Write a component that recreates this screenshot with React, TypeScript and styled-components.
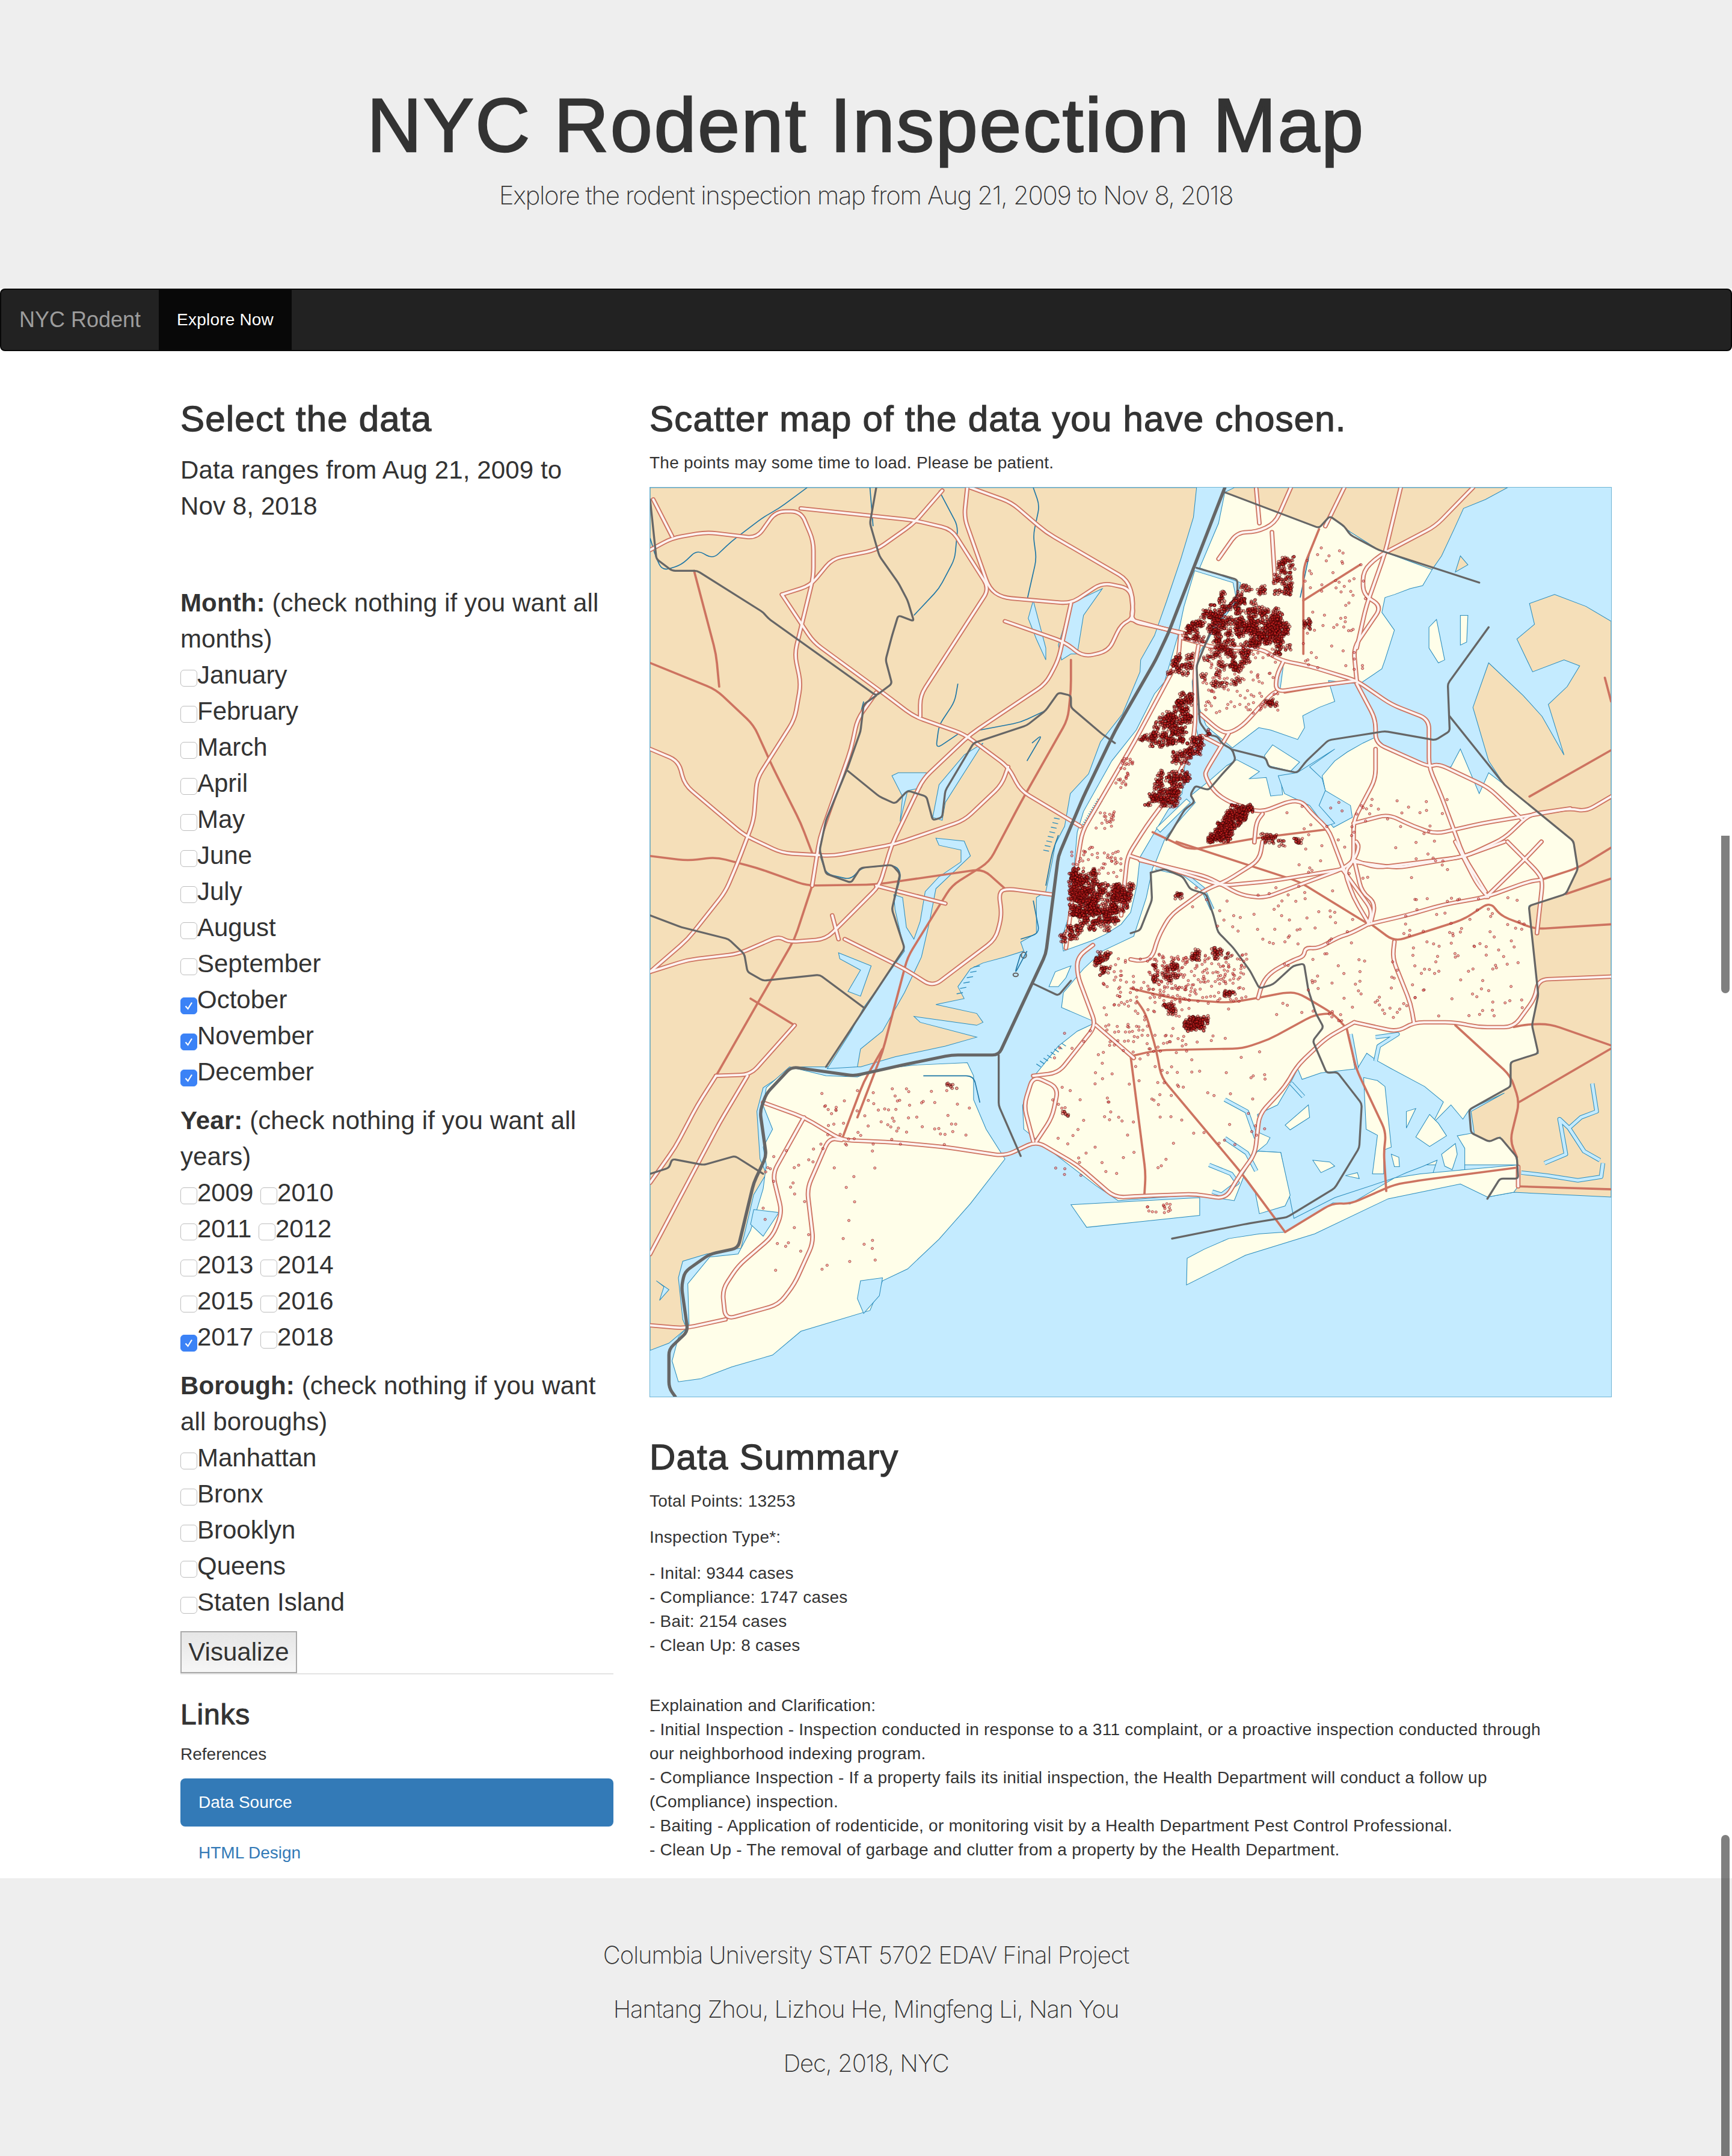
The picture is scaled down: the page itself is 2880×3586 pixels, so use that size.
import { useMemo } from "react";
import styled, { createGlobalStyle } from "styled-components";

const GlobalStyle = createGlobalStyle`
  html, body { margin: 0; padding: 0; background: #fff; }
  * { box-sizing: border-box; }
`;

const Page = styled.div`
  position: relative;
  width: 2880px;
  height: 3586px;
  overflow: hidden;
  font-family: "Liberation Sans", Arial, sans-serif;
  font-size: 28px;
  line-height: 40px;
  color: #333;
`;

const Jumbotron = styled.header`
  height: 480px;
  background: #eee;
  padding-top: 140px;
  text-align: center;
`;

const Title = styled.h1`
  margin: 0;
  font-size: 126px;
  line-height: 138px;
  font-weight: 400;
  letter-spacing: 2.5px;
  -webkit-text-stroke: 2.4px #333;
`;

const Lead = styled.p`
  margin: 17px 0 0;
  font-family: Inter, "Liberation Sans", sans-serif;
  font-size: 42px;
  line-height: 60px;
  font-weight: 200;
  letter-spacing: -1.4px;
`;

const Navbar = styled.nav`
  display: flex;
  height: 104px;
  background: #222;
  border: 2px solid #080808;
  border-radius: 8px;
`;

const Brand = styled.div`
  padding: 30px;
  font-size: 36px;
  line-height: 40px;
  color: #9d9d9d;
`;

const NavLink = styled.div`
  padding: 30px;
  background: #080808;
  color: #fff;
  letter-spacing: 0.2px;
`;

const Columns = styled.div`
  display: flex;
  height: 2540px;
  padding: 80px 0 0 270px;
`;

const Sidebar = styled.aside`
  width: 780px;
  padding: 0 30px;
`;

const Main = styled.main`
  width: 1660px;
  padding: 0 30px;
  letter-spacing: 0.24px;
`;

const Heading = styled.h2`
  margin: 0 0 20px;
  font-size: 60px;
  line-height: 66px;
  font-weight: 400;
  letter-spacing: 1.2px;
  -webkit-text-stroke: 1.3px #333;
`;

const BigText = styled.p`
  margin: 0 0 101px;
  padding-top: 2px;
  font-size: 42px;
  line-height: 60px;
  letter-spacing: 0.12px;
`;

const GroupLabel = styled.div`
  margin-top: 21px;
  font-size: 42px;
  line-height: 60px;
  letter-spacing: 0.12px;
  b { font-weight: 700; }
`;

const CheckRow = styled.div`
  font-size: 42px;
  line-height: 60px;
  white-space: nowrap;
`;

const Box = styled.span<{ $on?: boolean }>`
  display: inline-flex;
  align-items: center;
  justify-content: center;
  width: 28px;
  height: 28px;
  vertical-align: -5px;
  border-radius: 6px;
  background: ${(p) => (p.$on ? "#3b82f6" : "#fff")};
  border: 1px solid ${(p) => (p.$on ? "#3b82f6" : "#bdbdbd")};
`;

const Rule = styled.div`
  border-bottom: 2px solid #e3e3e3;
`;

const VisualizeButton = styled.button`
  display: block;
  width: 194px;
  height: 70px;
  margin: 18px 0 0;
  padding: 0;
  border: 2px solid #aaa;
  background: linear-gradient(#e6e6e6, #f6f6f6);
  font-family: inherit;
  font-size: 42px;
  color: #333;
`;

const LinksTitle = styled.h3`
  margin: 40px 0 20px;
  font-size: 48px;
  line-height: 53px;
  font-weight: 400;
  letter-spacing: 0.8px;
  -webkit-text-stroke: 1px #333;
`;

const Small = styled.p`
  margin: 0 0 20px;
`;

const Pill = styled.div<{ $active?: boolean }>`
  height: 80px;
  margin-bottom: 4px;
  padding: 20px 30px;
  border-radius: 8px;
  color: ${(p) => (p.$active ? "#fff" : "#337ab7")};
  background: ${(p) => (p.$active ? "#337ab7" : "transparent")};
`;

const MapFrame = styled.div`
  width: 1600px;
  height: 1514px;
  margin-bottom: 67px;
  border: 1px solid #6fb4d4;
  svg { display: block; width: 100%; height: 100%; }
`;

const Footer = styled.footer`
  height: 462px;
  padding-top: 98px;
  background: #eee;
  text-align: center;
  font-family: Inter, "Liberation Sans", sans-serif;
  font-size: 40px;
  line-height: 60px;
  font-weight: 200;
  letter-spacing: -1.05px;
  p { margin: 0 0 30px; }
`;

const ScrollThumb = styled.div<{ $top: number; $height: number }>`
  position: absolute;
  right: 4px;
  top: ${(p) => p.$top}px;
  width: 14px;
  height: ${(p) => p.$height}px;
  border-radius: 0 0 7px 7px;
  background: rgba(0, 0, 0, 0.5);
`;

const ScrollThumbLow = styled(ScrollThumb)`
  border-radius: 7px 7px 0 0;
`;

const WATER = "#c4ebff";
const TAN = "#f5dfb9";
const CREAM = "#fffee9";
const COAST = "#2a8cbc";
const ROAD = "#cd7360";
const ROAD_IN = "#fdf3f1";
const BORDER = "#666";

const tanLand = [
  "10,10 880,10 875,60 855,130 832,202 813,259 791,300 790,320 762,391 727,438 708,492 679,525 670,580 655,610 650,640 640,690 625,700 625,760 600,775 605,790 575,800 540,810 520,820 500,850 510,870 465,880 530,895 540,910 530,915 430,900 440,910 530,935 480,950 400,968 345,985 295,985 240,985 190,1020 180,1060 185,1140 195,1165 175,1200 155,1290 100,1300 62,1312 55,1340 62,1410 68,1425 40,1450 10,1462",
  "925,18 940,10 1375,10 1340,30 1305,45 1290,80 1270,125 1255,148 1170,115 1125,85 1092,58 1075,78",
  "1300,125 1312,140 1292,152",
  "1540,235 1500,210 1450,190 1410,205 1418,240 1390,265 1415,320 1465,300 1490,310 1470,345 1440,375 1465,460 1430,395 1400,360 1345,305 1320,380 1345,470 1370,510 1480,605 1487,652 1468,694 1409,714 1424,864 1414,915 1424,962 1380,977 1380,1018 1314,1057 1317,1096 1346,1111 1363,1103 1390,1137 1392,1165 1392,1186 1540,1191 1540,235",
  "1392,1186 1540,1191 1540,1204 1385,1196 1343,1204 1363,1173 1392,1173",
];

const waterOnTan = [
  "292,988 330,925 350,885 415,790 400,720 398,695 412,700 418,750 430,770 440,740 448,690 470,665 505,640 505,620 470,612 465,600 510,605 520,630 490,660 465,685 455,740 442,800 415,860 380,925 345,955 340,985",
  "310,793 362,815 345,866 325,858 345,822 312,803",
  "405,490 450,490 442,515 420,520 408,572 412,530 395,495",
  "510,460 470,510 460,565 475,570 480,540 510,490 540,440",
  "680,290 665,300 660,275 680,205 700,195 730,180 700,225 690,290",
  "620,200 640,280 640,300 625,265 612,230",
  "20,1345 40,1360 25,1378 32,1355",
];

const creamLand = [
  "232,985 290,1000 340,1002 370,990 430,982 515,978 525,1000 525,1040 545,1090 575,1140 520,1215 470,1275 420,1325 380,1345 360,1395 250,1430 205,1470 140,1490 90,1510 55,1515 45,1480 55,1440 72,1420 70,1350 105,1305 150,1300 170,1260 190,1190 195,1150 190,1120 205,1090 190,1050 195,1020",
  "925,18 1075,78 1092,58 1125,85 1170,115 1255,148 1240,175 1220,180 1195,190 1180,195 1175,220 1195,250 1180,300 1175,315 1140,340 1090,335 1100,370 1075,380 1049,394 1052,414 1041,434 998,418 979,414 937,448 905,420 895,410 880,370 877,310 883,300 902,259 943,202 950,170 885,145 915,70",
  "877,150 938,170 943,195 902,255 880,297 873,337 876,400 885,440 862,470 857,525 835,552 810,596 790,632 785,680 775,725 760,745 735,762 715,772 668,790 665,770 680,720 685,650 690,590 700,555 745,470 784,418 813,357 829,337 850,260 860,210",
  "944,468 980,488 964,500 991,498 998,529 1017,527 1014,498 1050,510 1070,545 1098,582 1128,565 1125,545 1085,520 1080,495 1100,470 1120,455 1145,440 1165,430 1190,455 1250,480 1285,480 1300,450 1330,525 1345,490 1370,510 1480,605 1487,652 1468,694 1409,714 1424,864 1414,915 1424,962 1380,977 1380,1018 1314,1057 1317,1096 1346,1111 1363,1103 1390,1137 1392,1155 1390,1150 1100,1150 985,1130 955,1170 940,1210 880,1200 755,1210 720,1185 640,1120 605,1090 603,1050 618,1005 660,950 690,925 720,910 665,885 668,860 700,820 730,790 780,765 800,700 810,650 815,640 830,600 857,565 878,540 870,529 902,502 928,478",
  "988,461 1001,443 1044,472 1030,487 994,478",
  "1250,245 1262,232 1275,300 1265,305 1250,280",
  "1300,225 1312,225 1310,270 1300,275",
  "645,850 655,825 680,815 672,835 660,850",
  "864,534 870,540 822,590 816,583",
];

const bayWater =
  "977,1065 980,1096 997,1104 992,1114 977,1127 1014,1129 1035,1240 1100,1205 1195,1172 1214,1163 1239,1153 1263,1142 1256,1165 1307,1158 1307,1122 1295,1101 1322,1096 1317,1060 1370,1029 1314,1057 1304,1073 1285,1049 1256,1080 1273,1044 1243,1018 1190,988 1168,975 1151,962 1136,988 1078,995 1048,1006 1041,988 1029,1013 1009,1049";

const creamOnBay = [
  "1021,1083 1058,1049 1060,1070 1029,1091",
  "1065,1142 1092,1145 1100,1152 1078,1163",
  "1117,1168 1136,1163 1139,1173",
  "1146,1003 1168,1008 1180,1018 1190,1120 1178,1125 1178,1165 1160,1165 1168,1100 1150,1090",
  "1214,1060 1229,1055 1214,1088",
  "1229,1103 1251,1065 1265,1080 1278,1101 1251,1119",
  "1270,1132 1292,1114 1295,1132 1287,1158 1275,1152",
  "1190,1132 1202,1137 1203,1153 1195,1153",
  "973,1194 953,1168 977,1127 1014,1129 1029,1201 1021,1219 980,1232",
  "680,1217 885,1205 885,1235 705,1255",
  "864,1352 865,1307 892,1292 931,1274 980,1266 1021,1263 1097,1214 1124,1216 1195,1172 1236,1165 1307,1158 1392,1150 1392,1186 1385,1196 1343,1204 1300,1182 1185,1207 1068,1266 958,1302",
];

const waterInLand = [
  "345,1345 380,1340 375,1370 350,1400 340,1375",
  "175,1225 215,1230 190,1270 170,1250",
  "1010,495 1040,490 1070,470 1100,450 1060,480 1080,500 1085,520 1075,545 1100,575 1085,580 1060,545 1020,525",
];

const creeks = [
  "815,650 860,660 890,685 905,720",
  "925,1040 960,1060 975,1105",
  "900,1150 935,1165 945,1180 920,1200 905,1195",
  "925,1105 960,1130 975,1160",
  "1030,1012 1050,1035",
  "1397,1163 1439,1168 1487,1176 1524,1170 1527,1147",
  "1434,1147 1468,1132 1458,1073 1473,1088 1492,1070 1517,1060 1510,1013",
  "1522,1142 1497,1127 1473,1088",
  "1125,930 1135,988",
  "1165,935 1200,930 1170,950 1165,975",
  "1015,310 1010,350",
];

const streams = [
  "10,95 20,130 30,150 60,140 85,115 110,130 140,100 190,60 215,45 260,10",
  "470,15 500,75 495,130 470,180 430,225",
  "360,10 365,75",
  "620,10 630,40 620,90 625,130 610,200",
  "350,370 330,450 300,540 278,620 290,660 330,670 345,650 400,645 410,660 395,720",
  "500,340 495,370 470,410 465,450 500,425",
  "525,420 600,405 640,385",
  "610,470 635,425 618,440",
  "1060,120 1045,195",
  "660,595 650,625 640,680",
  "620,705 630,760 600,770",
  "610,790 590,830 600,795",
  "445,1000 525,1000 535,1045",
];

// piers along the shore, start point, end point, count, tick vector
const piers: [number, number, number, number, number, number, number][] = [
  [698, 576, 722, 534, 13, 8, 5],
  [645, 622, 662, 568, 8, -9, -2],
  [632, 985, 672, 950, 8, -7, -5],
  [508, 860, 535, 815, 6, -10, 2],
];

const doubleRoads = [
  "10,115 45,95 100,85 180,95 210,50 250,50 270,100 270,160 240,290 250,340 240,400 180,500 175,570 150,640 130,690 70,770 10,825",
  "15,30 45,92",
  "220,190 265,175 300,130 370,115 430,70 475,15",
  "250,45 430,65 490,80 550,180 440,360 440,395",
  "515,10 510,60 550,180 570,195 680,205 730,170 775,180 780,230 760,240 740,285 700,295 670,270 575,235",
  "520,10 585,35 640,85 770,165 780,200 775,235 860,255",
  "220,190 270,270 380,355 430,395 510,425 580,480 600,520 695,580",
  "10,450 55,470 65,510 160,595 220,625 300,630 400,610 510,570 570,510 580,480",
  "370,355 340,400 330,450 280,600 268,680",
  "10,825 70,805 150,795 215,765 230,775 290,770 375,680 395,610 445,500 520,425 640,340 660,300 680,205",
  "370,680 480,710",
  "320,770 415,820 460,850 560,770 570,730 565,690 580,685 650,695",
  "300,730 310,770",
  "115,1000 85,1050 50,1120 10,1180",
  "165,1000 120,1080 60,1200 10,1300",
  "115,1000 170,998 240,915",
  "775,232 854,255",
  "854,259 851,300 781,438 698,589 690,640 672,785",
  "883,276 877,313 878,404 874,440 835,530 800,580 770,630 760,730",
  "856,263 889,273 902,278 982,281 1014,301 1058,310 1135,335 1190,375 1250,400 1250,480 1270,530 1305,630 1340,690",
  "1018,303 1007,327 1006,354 1061,345 1135,335",
  "886,391 915,418 931,424 953,411 998,359 1006,354",
  "931,424 896,485 893,495 908,522 931,539 982,557 1030,537 1049,539 1061,556 1090,585 1115,655",
  "889,428 916,443",
  "985,559 975,573 972,607",
  "1130,575 1185,560 1225,580 1260,593 1335,575 1420,560 1475,550 1500,555 1540,530",
  "1165,450 1165,500 1130,570 1130,640 1115,655 1130,700 1155,745",
  "1135,340 1165,400 1165,440 1250,480 1265,475 1345,515 1400,570",
  "1130,640 1200,650 1310,630 1370,600 1410,560 1475,550",
  "775,630 920,680 1000,672 1115,652",
  "1153,745 1214,730 1273,712 1341,699 1409,673 1429,670",
  "1292,606 1327,678 1344,699",
  "1375,606 1424,658 1431,673 1424,740 1422,760",
  "1429,606 1404,634 1341,699",
  "1131,637 1165,650 1302,632 1370,606",
  "1112,652 1160,722 1153,745",
  "1131,637 1143,691 1165,709 1158,740",
  "790,637 897,665 951,696 987,701 1112,652 1131,637 1139,614 1134,606",
  "985,606 980,637 926,673 895,686 838,730 819,766 809,802 790,807 775,804",
  "1153,745 1124,761 1107,766 1073,786 1053,784 1051,799 1036,804 999,825 985,843 978,869",
  "1131,910 1087,936 1041,982 1021,1018 980,1065 973,1132 951,1163 926,1207 877,1199 797,1202 750,1205 690,1150 625,1110 575,1135 480,1120 400,1112 315,1108 255,1070 190,1045",
  "1131,910 1200,926 1226,910 1292,910 1327,918 1385,918 1419,869 1424,838 1540,833",
  "1195,774 1192,802 1221,879 1226,910",
  "1392,1153 1392,1186",
  "625,1110 650,1070 660,1020 620,1000 605,1050 620,1110",
  "620,1000 660,995 720,915 690,830 690,800 715,780",
  "315,1108 295,1105 260,1190 270,1280 240,1350 215,1385 130,1410 125,1360 150,1320 205,1270 220,1230 205,1165 255,1070",
  "130,1410 65,1425 10,1420",
  "1320,10 1260,75 1170,125 1145,150 1145,190 1175,210 1130,280 1135,335",
  "1205,10 1180,120 1150,210 1135,280",
  "1030,10 1005,70 975,85 945,85 915,130",
  "1000,85 1005,170",
  "1115,10 1085,75",
  "975,12 980,70",
  "720,915 780,970",
];

const solidRoads = [
  "10,630 70,638 115,632 180,650 260,680 370,678 540,652 575,685",
  "10,305 115,350 175,410 205,480 250,575 268,625",
  "80,150 115,290 120,345",
  "268,680 240,770 180,880 115,1000",
  "680,300 680,350 675,400 600,540 550,640 490,680 420,800 380,960 340,1070",
  "170,870 240,915",
  "810,590 870,620 975,600 1090,585",
  "848,606 1043,673 1151,743",
  "775,853 848,871 931,877 978,869 1019,860 1041,860 1097,895 1117,918",
  "775,967 816,957 953,954 995,939 1068,897 1097,895",
  "785,874 799,895 816,957 824,1003 951,1163 1021,1263",
  "775,967 799,1165 797,1199",
  "1385,918 1409,913 1443,913 1540,949",
  "1158,745 1195,774 1305,737 1348,707 1363,730 1419,753 1540,745",
  "1292,915 1380,1000 1394,1044 1379,1109 1390,1137",
  "1394,1044 1540,954",
  "1468,694 1540,668",
  "1429,670 1487,650 1540,616",
  "1119,920 1134,988 1182,1096 1178,1127 1182,1194",
  "1021,1263 1097,1214 1124,1216 1195,1183 1236,1176 1387,1155",
  "1392,1186 1540,1191",
  "315,1108 350,1010 380,955",
  "1075,80 1050,145 1050,290",
  "1140,140 1050,200",
  "1410,530 1540,452",
  "1530,330 1540,370",
  "1135,335 1020,355",
];

const borders = [
  "10,30 20,130 45,150 85,150 190,220 198,230 370,360 395,340 385,300 395,260 405,225 430,235 420,200 405,170 375,125 360,70 370,10",
  "370,360 350,375 345,420 325,480 290,570 280,620 290,660 330,675 345,650 395,645 408,660 395,720 415,785 290,985",
  "325,487 375,530 400,542 420,520 450,530 460,570 475,565 480,520 525,440 610,410 640,385 660,355 680,360 680,380 730,425 750,440",
  "10,730 60,750 135,770 160,795 165,825 190,840 280,830 350,885",
  "10,1165 40,1155 45,1140 95,1150 145,1135 190,1165",
  "620,845 660,865 680,840",
  "565,965 565,1050 600,1135",
  "880,145 945,165 945,190 905,245 880,310 885,405 899,426 913,429 921,441 937,451 942,468 921,492 899,519 886,515 878,512 870,527 877,539 861,552 832,603",
  "807,658 829,652 858,665 870,686 895,694 907,730 914,758 938,784 965,823 980,853 1002,846 1034,815 1051,811 1058,856 1070,895 1082,918 1065,941 1087,995 1104,994 1143,1047 1139,1121 1100,1189 1024,1238 960,1249 841,1274",
  "807,658 809,704 790,755 775,760",
  "1345,245 1280,340 1283,420 1260,435 1180,420 1090,435 1055,470 1040,490 995,480 990,465 937,451",
  "1283,395 1370,510 1480,605 1487,652 1468,694 1409,714 1424,864 1414,915 1424,962 1380,977 1380,1018 1314,1057 1317,1096 1346,1111 1363,1103 1390,1137 1392,1173 1363,1173 1343,1207",
  "925,18 1075,78 1092,58 1115,75 1125,90 1170,115 1330,170",
];

const thickBorders = [
  "925,10 835,255 815,300 750,420 700,530 660,630 640,795 565,965 490,965 420,980 335,1000 235,985 195,1030 185,1060 195,1135 175,1180 150,1290 105,1300 65,1330 60,1355 70,1430 40,1460 40,1525 50,1540",
];

// cx, cy, rx, ry, count, slant
const clusters: [number, number, number, number, number, number][] = [
  [960, 252, 52, 24, 620, 0], [990, 240, 26, 32, 350, 0], [1012, 262, 15, 30, 220, 0],
  [920, 215, 22, 28, 260, -0.8], [885, 248, 24, 18, 160, -0.5], [965, 195, 22, 26, 150, -0.5],
  [1020, 160, 16, 30, 180, -0.3], [925, 308, 36, 34, 320, -0.3], [860, 305, 18, 18, 130, -0.6],
  [1052, 240, 7, 5, 30, 0], [1000, 367, 8, 7, 30, 0], [950, 335, 60, 55, 120, 0], [1100, 210, 50, 110, 60, 0],
  [855, 378, 13, 22, 190, -0.5], [840, 418, 26, 24, 480, -0.5], [880, 440, 11, 22, 120, -0.5],
  [855, 465, 13, 10, 90, -0.5], [835, 515, 23, 28, 480, -0.4], [797, 430, 5, 5, 25, 0],
  [765, 490, 10, 25, 30, -0.3], [735, 570, 15, 15, 20, 0],
  [935, 575, 16, 28, 750, -0.7], [1015, 605, 30, 9, 70, 0],
  [700, 690, 20, 38, 900, 0], [745, 700, 28, 22, 520, -0.4], [725, 735, 28, 18, 280, 0], [690, 760, 22, 14, 90, -0.3],
  [720, 640, 40, 25, 50, 0],
  [730, 810, 10, 18, 110, 0], [850, 700, 4, 4, 20, 0], [880, 797, 8, 6, 50, 0], [920, 795, 15, 6, 50, 0],
  [825, 825, 25, 15, 110, 0], [885, 835, 75, 40, 200, 0], [930, 860, 8, 3, 30, 0], [878, 912, 17, 9, 260, 0],
  [835, 885, 10, 8, 50, 0], [800, 880, 70, 80, 140, 0],
  [1150, 600, 130, 70, 60, 0], [1000, 730, 130, 50, 50, 0], [1300, 800, 110, 100, 100, 0], [1100, 850, 100, 60, 45, 0],
  [400, 1070, 120, 50, 70, 0], [280, 1230, 90, 110, 40, 0], [490, 1018, 8, 4, 10, 0],
  [750, 1050, 100, 130, 70, 0], [900, 1000, 100, 130, 50, 0], [820, 1225, 20, 10, 15, 0], [670, 1060, 4, 4, 8, 0],
];

type Dot = { x: number; y: number };

function useDots() {
  return useMemo(() => {
    let seed = 12345;
    const rand = () => {
      seed = (seed * 1664525 + 1013904223) % 4294967296;
      return seed / 4294967296;
    };
    const inBox = (v: number) => (rand() * 2 - 1) * v;
    const sparse: Dot[] = [];
    const packed: Dot[] = [];
    for (const [cx, cy, rx, ry, n, slant] of clusters) {
      const dense = n / (4 * rx * ry) > 0.05;
      const patches = dense ? Math.max(3, Math.round(n / 9)) : n;
      for (let k = 0; k < patches; k++) {
        const py = inBox(ry);
        const px = inBox(rx) + slant * py;
        if (!dense) {
          sparse.push({ x: cx + px, y: cy + py });
          continue;
        }
        for (let i = 0; i < Math.round(n / patches); i++) {
          packed.push({ x: cx + px + inBox(5), y: cy + py + inBox(5) });
        }
      }
    }
    return { sparse, packed };
  }, []);
}

// rounds the corners of a polyline, the source data is only vertices
function rounded(points: string, radius: number) {
  const pts = points.split(" ").map((s) => s.split(",").map(Number));
  let d = `M${pts[0][0]} ${pts[0][1]}`;
  for (let i = 1; i < pts.length - 1; i++) {
    const [x, y] = pts[i];
    const [ax, ay] = pts[i - 1];
    const [bx, by] = pts[i + 1];
    const la = Math.hypot(ax - x, ay - y);
    const lb = Math.hypot(bx - x, by - y);
    const ra = Math.min(radius, la / 2) / la;
    const rb = Math.min(radius, lb / 2) / lb;
    d += `L${x + (ax - x) * ra} ${y + (ay - y) * ra}Q${x} ${y} ${x + (bx - x) * rb} ${y + (by - y) * rb}`;
  }
  const last = pts[pts.length - 1];
  return `${d}L${last[0]} ${last[1]}`;
}

function pierTicks() {
  let d = "";
  for (const [x0, y0, x1, y1, n, dx, dy] of piers) {
    for (let i = 0; i < n; i++) {
      const x = x0 + ((x1 - x0) * i) / (n - 1);
      const y = y0 + ((y1 - y0) * i) / (n - 1);
      d += `M${x} ${y}l${dx} ${dy}`;
    }
  }
  return d;
}

function RodentMap() {
  const { sparse, packed } = useDots();
  return (
    <svg viewBox="10 10 1530 1530" preserveAspectRatio="none">
      <rect x="10" y="10" width="1530" height="1530" fill={WATER} />
      <g fill={TAN} stroke={COAST} strokeWidth="1">
        {tanLand.map((p) => <polygon key={p} points={p} />)}
      </g>
      <g fill={WATER} stroke={COAST} strokeWidth="1">
        {waterOnTan.map((p) => <polygon key={p} points={p} />)}
      </g>
      <g fill={CREAM} stroke={COAST} strokeWidth="1">
        {creamLand.map((p) => <polygon key={p} points={p} />)}
      </g>
      <polygon points={bayWater} fill={WATER} stroke={COAST} strokeWidth="1" />
      <g fill={CREAM} stroke={COAST} strokeWidth="1">
        {creamOnBay.map((p) => <polygon key={p} points={p} />)}
      </g>
      <g fill={WATER} stroke={COAST} strokeWidth="1">
        {waterInLand.map((p) => <polygon key={p} points={p} />)}
      </g>
      <path d={pierTicks()} stroke={COAST} strokeWidth="1.4" fill="none" />
      <g fill={WATER} stroke={BORDER} strokeWidth="2">
        <ellipse cx="592" cy="830" rx="4" ry="3" />
        <ellipse cx="605" cy="797" rx="4" ry="5" />
      </g>
      <g fill="none" strokeLinejoin="round">
        {creeks.map((p) => <polyline key={p} points={p} stroke={COAST} strokeWidth="7" />)}
        {creeks.map((p) => <polyline key={p + "in"} points={p} stroke={WATER} strokeWidth="5" />)}
        {streams.map((p) => <path key={p} d={rounded(p, 12)} stroke="#1d76a6" strokeWidth="1.6" />)}
      </g>
      <g fill="none" strokeLinejoin="round" strokeLinecap="round">
        {solidRoads.map((p) => <path key={p} d={rounded(p, 16)} stroke={ROAD} strokeWidth="3.6" />)}
        {doubleRoads.map((p) => <path key={p} d={rounded(p, 16)} stroke={ROAD} strokeWidth="7.4" />)}
        {doubleRoads.map((p) => <path key={p + "in"} d={rounded(p, 16)} stroke={ROAD_IN} strokeWidth="3.8" />)}
        {borders.map((p) => <path key={p} d={rounded(p, 5)} stroke={BORDER} strokeWidth="3.2" />)}
        {thickBorders.map((p) => <path key={p} d={rounded(p, 10)} stroke={BORDER} strokeWidth="5.2" />)}
      </g>
      <g fill="rgba(255,100,100,0.5)" stroke="rgba(110,10,10,0.75)" strokeWidth="0.8">
        {sparse.map((d, i) => <circle key={i} cx={d.x} cy={d.y} r="2" />)}
      </g>
      <g fill="rgba(240,40,40,0.4)" stroke="rgba(50,0,0,0.8)" strokeWidth="0.8">
        {packed.map((d, i) => <circle key={i} cx={d.x} cy={d.y} r="2.3" />)}
      </g>
    </svg>
  );
}

const months = ["January", "February", "March", "April", "May", "June", "July", "August", "September", "October", "November", "December"];
const yearRows = [[2009, 2010], [2011, 2012], [2013, 2014], [2015, 2016], [2017, 2018]];
const boroughs = ["Manhattan", "Bronx", "Brooklyn", "Queens", "Staten Island"];

function Check({ on }: { on?: boolean }) {
  return (
    <Box $on={on}>
      {on && (
        <svg width="18" height="18" viewBox="0 0 18 18" fill="none" stroke="#fff" strokeWidth="2.2">
          <path d="M3.5 9.5 L7.5 14 L14 3.5" />
        </svg>
      )}
    </Box>
  );
}

function Sideform() {
  return (
    <Sidebar>
      <Heading>Select the data</Heading>
      <BigText>Data ranges from Aug 21, 2009 to<br />Nov 8, 2018</BigText>
      <GroupLabel><b>Month:</b> (check nothing if you want all months)</GroupLabel>
      {months.map((m, i) => (
        <CheckRow key={m}><Check on={i > 8} />{m}</CheckRow>
      ))}
      <GroupLabel><b>Year:</b> (check nothing if you want all years)</GroupLabel>
      {yearRows.map((row) => (
        <CheckRow key={row[0]}>
          <Check on={row[0] === 2017} />{row[0]}{" "}
          <Check />{row[1]}
        </CheckRow>
      ))}
      <GroupLabel><b>Borough:</b> (check nothing if you want all boroughs)</GroupLabel>
      {boroughs.map((b) => (
        <CheckRow key={b}><Check />{b}</CheckRow>
      ))}
      <VisualizeButton type="button">Visualize</VisualizeButton>
      <Rule />
      <LinksTitle>Links</LinksTitle>
      <Small>References</Small>
      <Pill $active>Data Source</Pill>
      <Pill>HTML Design</Pill>
    </Sidebar>
  );
}

export default function App() {
  return (
    <Page>
      <GlobalStyle />
      <Jumbotron>
        <Title>NYC Rodent Inspection Map</Title>
        <Lead>Explore the rodent inspection map from Aug 21, 2009 to Nov 8, 2018</Lead>
      </Jumbotron>
      <Navbar>
        <Brand>NYC Rodent</Brand>
        <NavLink>Explore Now</NavLink>
      </Navbar>
      <Columns>
        <Sideform />
        <Main>
          <Heading>Scatter map of the data you have chosen.</Heading>
          <Small>The points may some time to load. Please be patient.</Small>
          <MapFrame><RodentMap /></MapFrame>
          <Heading>Data Summary</Heading>
          <Small>Total Points: 13253</Small>
          <Small>Inspection Type*:</Small>
          <Small>
            - Inital: 9344 cases<br />
            - Compliance: 1747 cases<br />
            - Bait: 2154 cases<br />
            - Clean Up: 8 cases
          </Small>
          <br />
          <Small>
            Explaination and Clarification:<br />
            - Initial Inspection - Inspection conducted in response to a 311 complaint, or a proactive inspection conducted through<br />
            our neighborhood indexing program.<br />
            - Compliance Inspection - If a property fails its initial inspection, the Health Department will conduct a follow up<br />
            (Compliance) inspection.<br />
            - Baiting - Application of rodenticide, or monitoring visit by a Health Department Pest Control Professional.<br />
            - Clean Up - The removal of garbage and clutter from a property by the Health Department.
          </Small>
        </Main>
      </Columns>
      <Footer>
        <p>Columbia University STAT 5702 EDAV Final Project</p>
        <p>Hantang Zhou, Lizhou He, Mingfeng Li, Nan You</p>
        <p>Dec, 2018, NYC</p>
      </Footer>
      <ScrollThumb $top={1390} $height={262} />
      <ScrollThumbLow $top={3052} $height={534} />
    </Page>
  );
}
